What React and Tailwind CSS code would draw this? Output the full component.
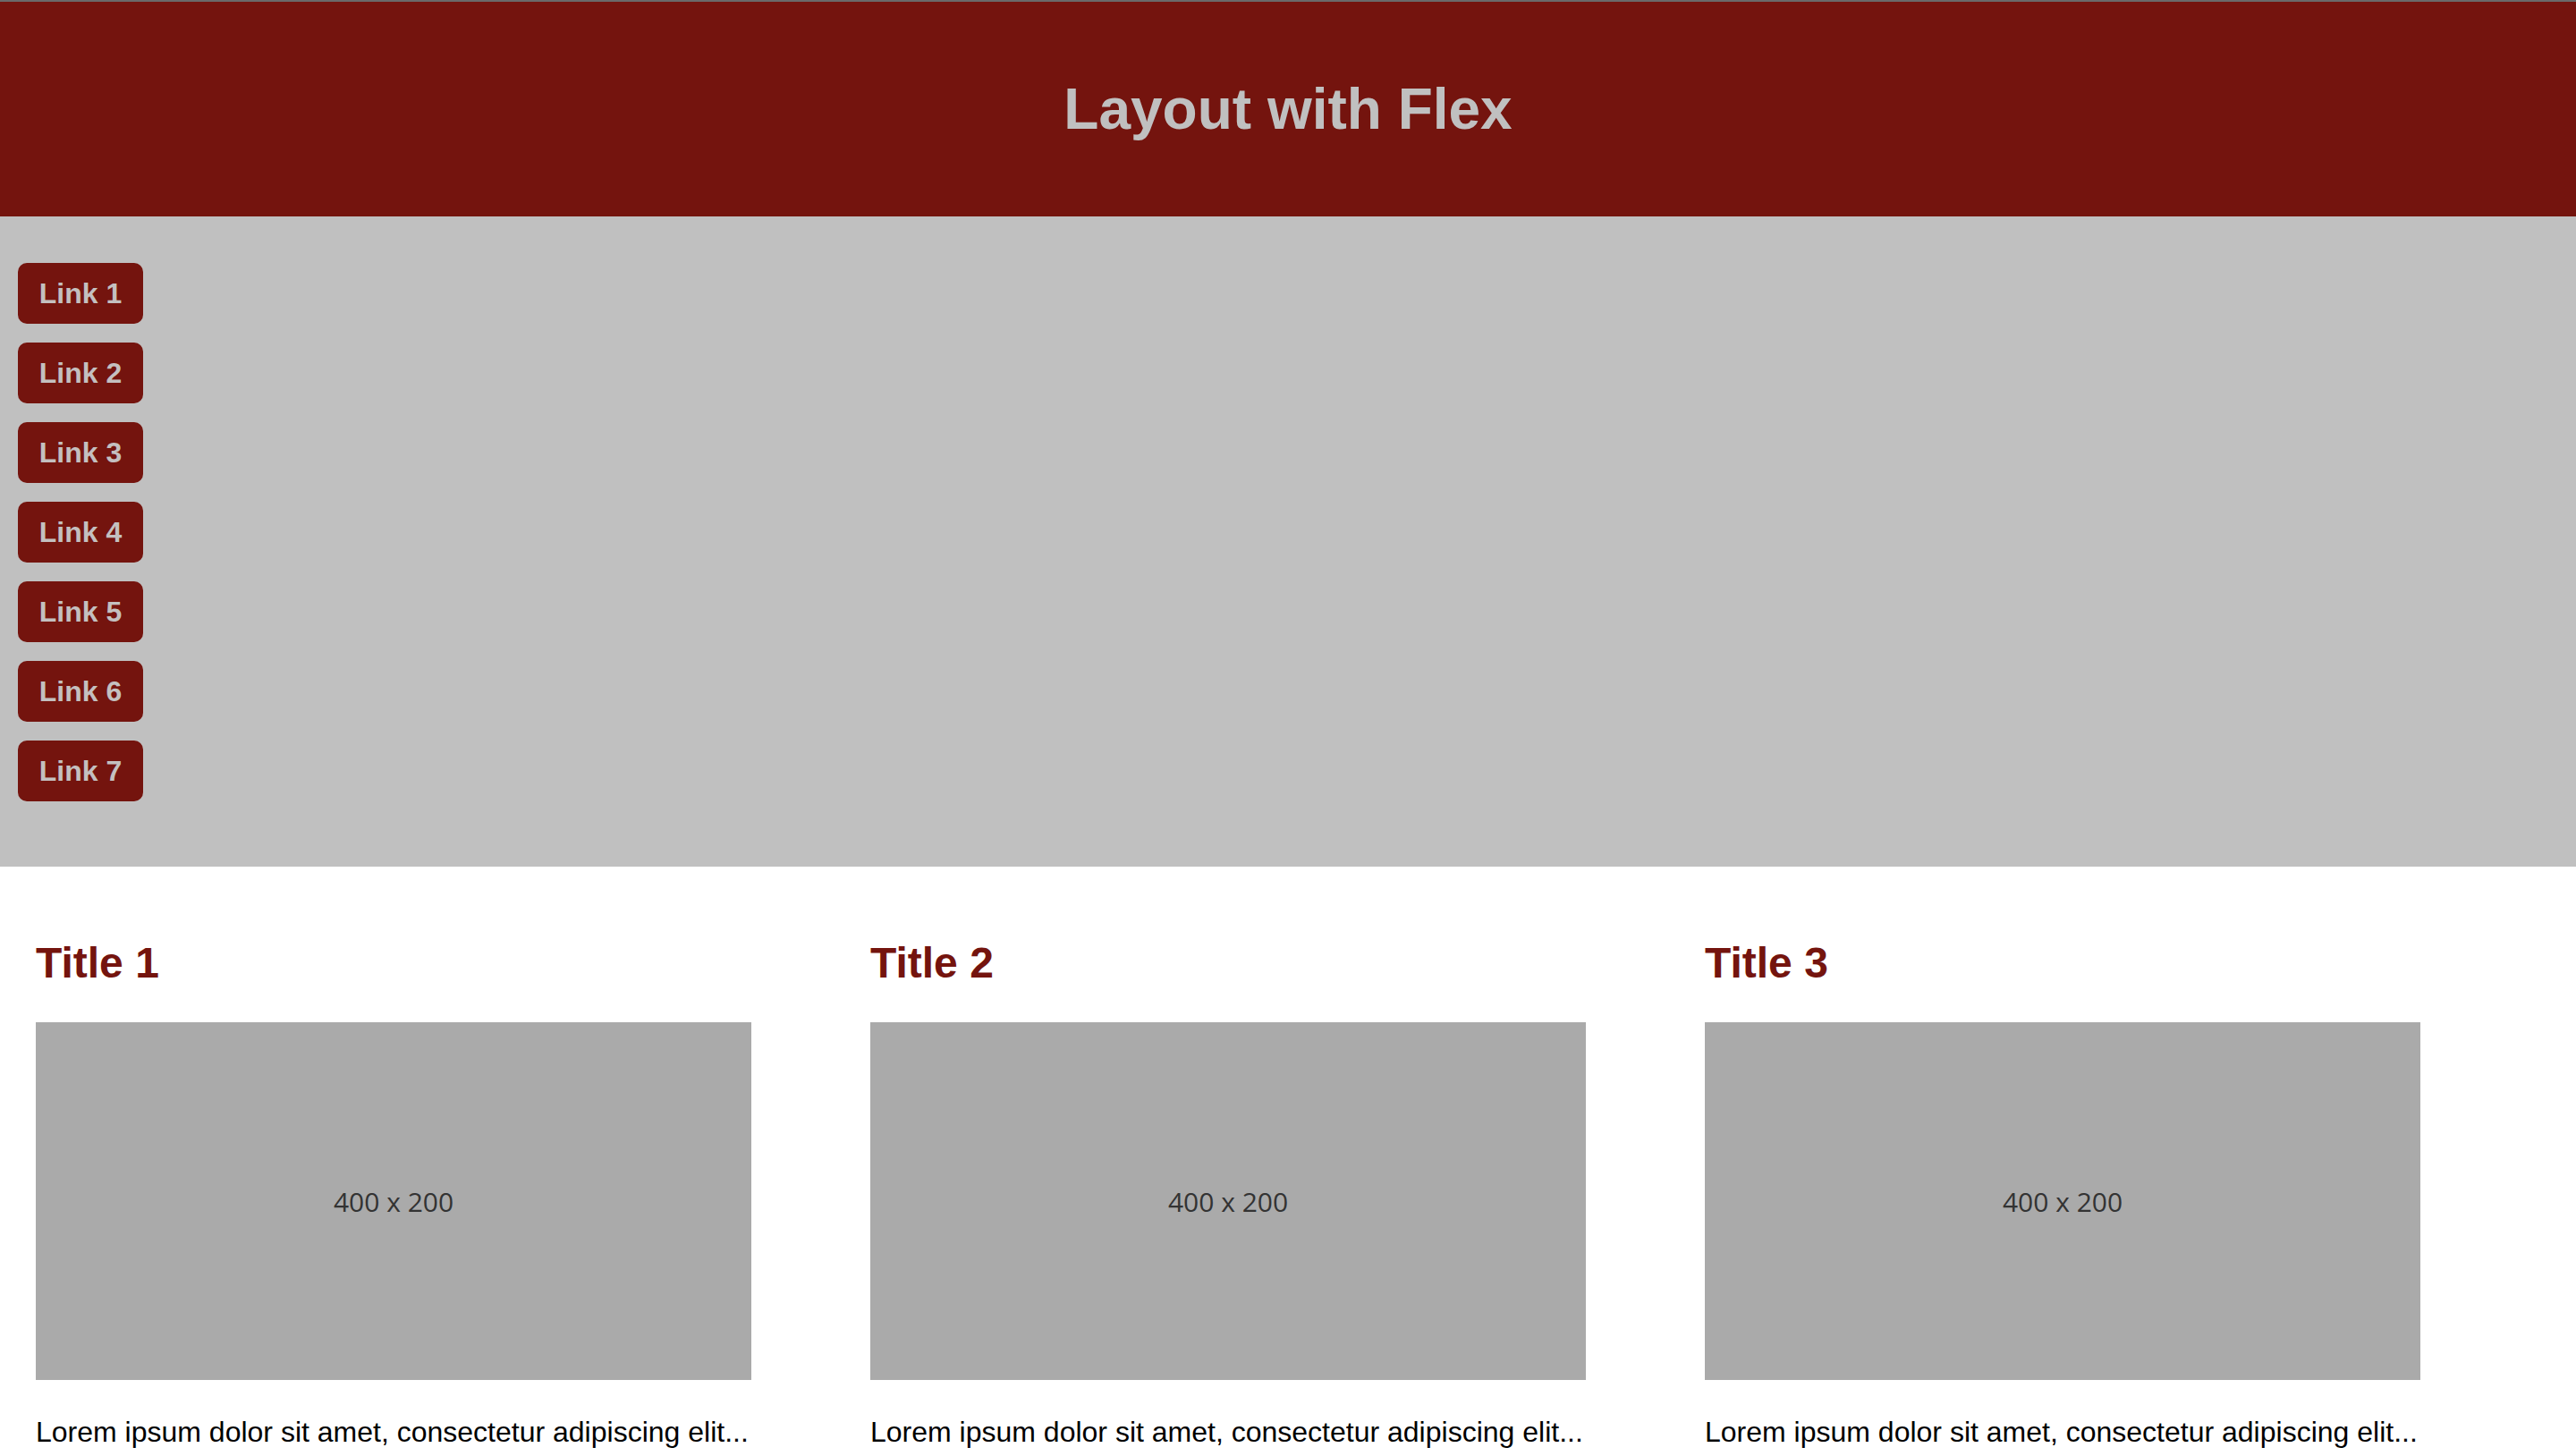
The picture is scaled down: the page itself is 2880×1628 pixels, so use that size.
export default function App() {
  const links = ["Link 1", "Link 2", "Link 3", "Link 4", "Link 5", "Link 6", "Link 7"];
  const cards = ["Title 1", "Title 2", "Title 3"];
  return (
    <div className="w-[2880px] h-[1628px] overflow-hidden bg-white" style={{ fontFamily: '"Liberation Sans", Arial, sans-serif' }}>
      <div className="h-[2px] bg-[#6a6a6a]" />
      <header className="h-[240px] bg-[#74140e] flex items-center justify-center">
        <h1 className="text-[64px] font-bold leading-[74px] text-[#c0c0c0]">Layout with Flex</h1>
      </header>
      <nav className="h-[727px] bg-[#c0c0c0] pt-[52px] pl-[20px] flex flex-col items-start gap-[21px]">
        {links.map((l) => (
          <a key={l} className="w-[140px] h-[68px] rounded-[10px] bg-[#74140e] text-[#c4c0c0] text-[32px] font-bold flex items-center justify-center">
            {l}
          </a>
        ))}
      </nav>
      <main className="flex gap-[133px] px-[40px] pt-[81px]">
        {cards.map((t) => (
          <section key={t} className="w-[800px] flex flex-col">
            <h2 className="text-[48px] font-bold leading-[54px] text-[#74140e]">{t}</h2>
            <div className="mt-[39px] w-[800px] h-[400px] bg-[#aaaaaa] flex items-center justify-center">
              <span className="text-[30px] text-[#333333]" style={{ fontFamily: '"Open Sans", sans-serif' }}>400 x 200</span>
            </div>
            <p className="mt-[40px] text-[32px] leading-[36px] text-black">Lorem ipsum dolor sit amet, consectetur adipiscing elit...</p>
          </section>
        ))}
      </main>
    </div>
  );
}
